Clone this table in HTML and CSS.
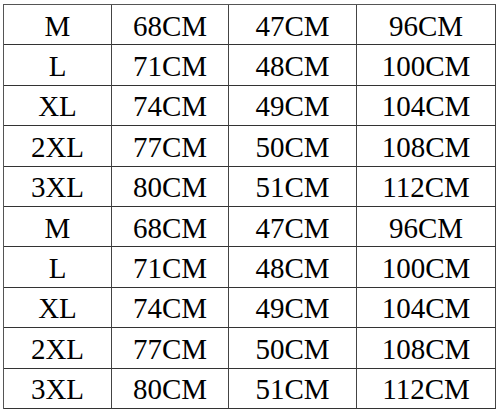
FILE: index.html
```html
<!DOCTYPE html>
<html>
<head>
<meta charset="utf-8">
<link rel="stylesheet" href="styles.css">
</head>
<body>
<div class="sheet">
  <div class="cell">M</div><div class="cell">68CM</div><div class="cell">47CM</div><div class="cell">96CM</div>
  <div class="cell">L</div><div class="cell">71CM</div><div class="cell">48CM</div><div class="cell">100CM</div>
  <div class="cell">XL</div><div class="cell">74CM</div><div class="cell">49CM</div><div class="cell">104CM</div>
  <div class="cell">2XL</div><div class="cell">77CM</div><div class="cell">50CM</div><div class="cell">108CM</div>
  <div class="cell">3XL</div><div class="cell">80CM</div><div class="cell">51CM</div><div class="cell">112CM</div>
  <div class="cell">M</div><div class="cell">68CM</div><div class="cell">47CM</div><div class="cell">96CM</div>
  <div class="cell">L</div><div class="cell">71CM</div><div class="cell">48CM</div><div class="cell">100CM</div>
  <div class="cell">XL</div><div class="cell">74CM</div><div class="cell">49CM</div><div class="cell">104CM</div>
  <div class="cell">2XL</div><div class="cell">77CM</div><div class="cell">50CM</div><div class="cell">108CM</div>
  <div class="cell">3XL</div><div class="cell">80CM</div><div class="cell">51CM</div><div class="cell">112CM</div>
</div>
</body>
</html>
```
FILE: styles.css
```css
html, body {
  margin: 0;
  padding: 0;
  background: #ffffff;
}
body {
  padding: 4px 0 0 3px;
}
.sheet {
  display: grid;
  grid-template-columns: 108px 117px 128px 139px;
  grid-template-rows: repeat(10, 1fr);
  width: 492px;
  height: 404px;
  border-top: 1px solid #555;
  border-left: 1px solid #555;
  font-family: "Liberation Serif", "Times New Roman", serif;
  font-size: 29px;
  color: #000;
}
.cell {
  display: flex;
  align-items: center;
  justify-content: center;
  padding-top: 3px;
  border-right: 1px solid #444;
  border-bottom: 1px solid #333;
  line-height: 1;
}
```
